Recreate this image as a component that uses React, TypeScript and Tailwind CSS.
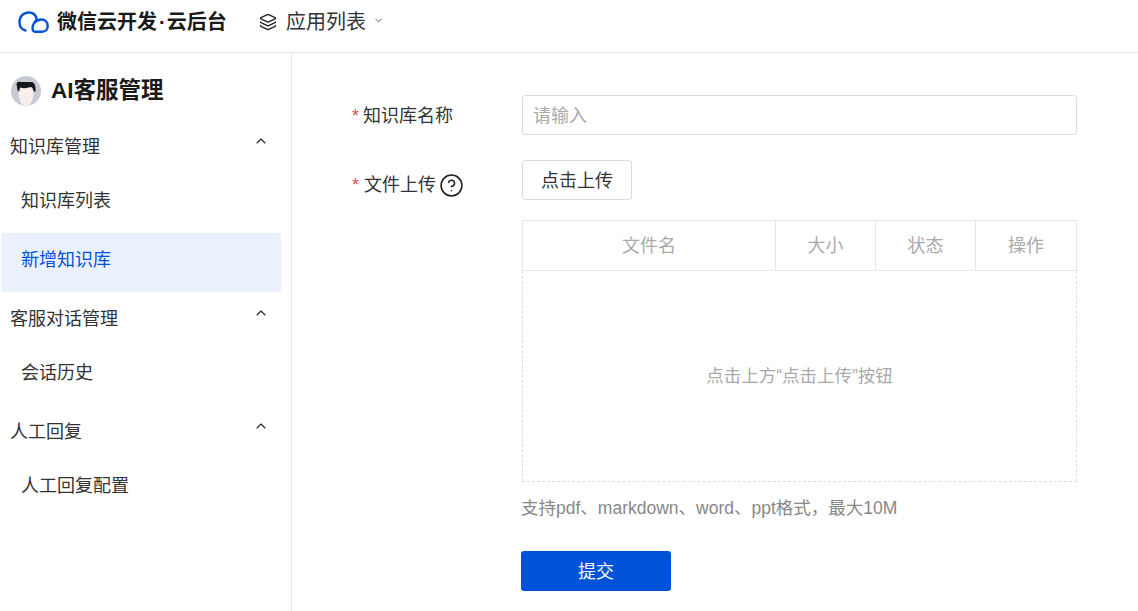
import { ChevronDown, ChevronUp, CircleHelp, Layers } from "lucide-react";

function Logo() {
  return (
    <svg width="31" height="23" viewBox="0 0 31 23" fill="none" className="shrink-0">
      <path
        d="M7.5 19.5C3.5 18.5 1.5 15 1.5 11C1.5 5.5 5.5 1.5 11 1.5C15 1.5 17.5 4 18.5 7C18.8 9 17 10.5 15.8 12.5C14 15.5 13.8 20.7 17 20.7H24C27.5 20.7 29.7 18 29.7 15C29.7 11 27 8.5 23.5 8.5C20.5 8.5 18 10 15.8 12.5"
        stroke="#0052d9"
        strokeWidth="2.4"
        strokeLinecap="round"
        strokeLinejoin="round"
      />
    </svg>
  );
}

function Avatar() {
  return (
    <svg width="30" height="30" viewBox="0 0 30 30" className="shrink-0">
      <circle cx="15" cy="15" r="15" fill="#c6cbd3" />
      <path d="M7 10C7 22 9 30 15 30C21 30 23 22 23 10Z" fill="#f8eeec" />
      <path d="M5.5 8Q6 5 10 6L21 6Q25 7 24.5 15.5L22.5 15.5Q22 11.5 20 11Q14 13 9 11.5L8 16L6.5 14Z" fill="#17181c" />
    </svg>
  );
}

function Group({ title, children }: { title: string; children: React.ReactNode }) {
  return (
    <div>
      <div className="flex h-[54px] items-center justify-between pl-[10px] pr-[22px]">
        <span>{title}</span>
        <ChevronUp size={16} strokeWidth={1.6} className="mb-[12px] text-[#222]" />
      </div>
      {children}
    </div>
  );
}

function Item({ label, active }: { label: string; active?: boolean }) {
  return (
    <div
      className={
        active
          ? "ml-[1px] mr-[10px] flex h-[59px] items-center rounded-[3px] bg-[#ebf1fc] pb-[4px] pl-[20px] text-[#0052d9]"
          : "ml-[1px] mr-[10px] flex h-[59px] items-center pb-[4px] pl-[20px]"
      }
    >
      {label}
    </div>
  );
}

export default function App() {
  return (
    <div
      className="flex h-[611px] w-[1138px] flex-col overflow-hidden bg-white text-[18px] text-[#333]"
      style={{ fontFamily: '"Liberation Sans", "Noto Sans CJK SC", sans-serif' }}
    >
      <header className="flex h-[53px] shrink-0 items-start border-b border-[#e6e6e6] pt-[7px]">
        <div className="ml-[18px] flex w-[208px] items-center gap-[8px]">
          <Logo />
          <span className="whitespace-nowrap text-[20px] font-semibold leading-[30px] text-[#1a1a1a]">
            微信云开发<span className="ml-[2px] mr-[1px]">·</span>云后台
          </span>
        </div>
        <div className="ml-[33px] flex items-center">
          <Layers size={18} strokeWidth={1.7} className="text-[#222]" />
          <span className="ml-[9px] text-[20px] leading-[30px]">应用列表</span>
          <ChevronDown size={11} strokeWidth={1.7} className="mb-[3px] ml-[7px] text-[#333]" />
        </div>
      </header>

      <div className="flex min-h-0 flex-1">
        <aside className="w-[292px] shrink-0 border-r border-[#e6e6e6]">
          <div className="flex items-center gap-[10px] pb-[14px] pl-[11px] pt-[23px]">
            <Avatar />
            <span className="-mt-[1px] text-[22.5px] font-bold leading-[30px] text-[#1a1a1a]">AI客服管理</span>
          </div>
          <Group title="知识库管理">
            <Item label="知识库列表" />
            <Item label="新增知识库" active />
          </Group>
          <Group title="客服对话管理">
            <Item label="会话历史" />
          </Group>
          <Group title="人工回复">
            <Item label="人工回复配置" />
          </Group>
        </aside>

        <main className="flex-1 pl-[60px] pt-[42px]">
          <div className="flex h-[40px]">
            <div className="flex w-[170px] items-center pt-[2px]">
              <span className="w-[11px] text-[#e34d59]">*</span>
              <span>知识库名称</span>
            </div>
            <input
              placeholder="请输入"
              className="h-[40px] w-[555px] rounded-[3px] border border-[#dcdcdc] px-[10px] pt-[2px] text-[18px] placeholder:text-[#aaa]"
            />
          </div>

          <div className="mt-[25px] flex">
            <div className="flex h-[50px] w-[170px] items-center">
              <span className="w-[12px] text-[#e34d59]">*</span>
              <span>文件上传</span>
              <CircleHelp size={25} strokeWidth={1.5} className="ml-[3px] text-[#222]" />
            </div>
            <div className="w-[555px]">
              <button className="h-[40px] w-[110px] rounded-[3px] border border-[#dcdcdc] bg-white pt-[2px] text-[#333]">
                点击上传
              </button>
              <div className="mt-[20px] text-[#aaa]">
                <div className="flex h-[51px] border border-[#e6e6e6]">
                  <div className="flex w-[253px] items-center justify-center border-r border-[#e6e6e6] pt-[2px]">文件名</div>
                  <div className="flex w-[100px] items-center justify-center border-r border-[#e6e6e6] pt-[2px]">大小</div>
                  <div className="flex w-[100px] items-center justify-center border-r border-[#e6e6e6] pt-[2px]">状态</div>
                  <div className="flex flex-1 items-center justify-center pt-[2px]">操作</div>
                </div>
                <div className="flex h-[211px] items-center justify-center border border-t-0 border-dashed border-[#dcdcdc] text-[17.5px]">
                  点击上方“点击上传”按钮
                </div>
              </div>
              <p className="-ml-[1px] mt-[13px] whitespace-nowrap text-[17.5px] leading-[26px] text-[#888]">
                支持pdf、markdown、word、ppt格式，最大10M
              </p>
              <button className="-ml-[1px] mt-[30px] block h-[40px] w-[150px] rounded-[3px] bg-[#0052d9] pt-[2px] text-white">
                提交
              </button>
            </div>
          </div>
        </main>
      </div>
    </div>
  );
}
